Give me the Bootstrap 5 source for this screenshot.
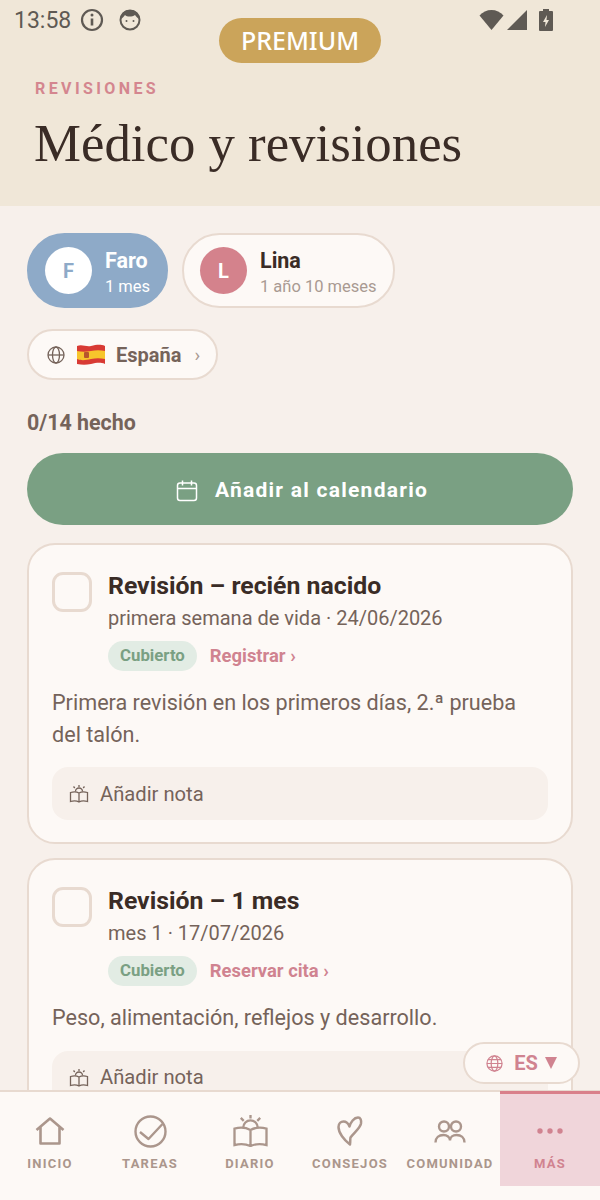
<!DOCTYPE html>
<html lang="es">
<head>
  <meta charset="UTF-8" />
  <meta name="viewport" content="width=device-width, initial-scale=1.0" />
  <title>Médico y revisiones</title>
  <link rel="stylesheet" href="https://cdn.jsdelivr.net/npm/bootstrap@5.3.3/dist/css/bootstrap.min.css" />
  <style>
    html, body { height: 100%; }
    body { background-color: #f7f0eb; font-family: Roboto, "Liberation Sans", sans-serif; color: #3a2c26; overflow: hidden; }
    #app { width: 600px; height: 1200px; overflow: hidden; position: relative; }

    .top-head { background-color: #f0e7d8; height: 206px; }
    .status-row { height: 40px; padding: 0 0 0 14px; color: #5f5a54; font-size: 23px; line-height: 40px; }
    .status-time { padding-top: 2px; }
    .status-right { margin-right: 47px; }
    .premium-pill { position: absolute; top: 18px; left: 219px; width: 162px; height: 45px; border-radius: 23px; background-color: #cba45a; color: #fff; font-family: "Noto Sans", sans-serif; font-size: 25px; font-weight: 500; }
    .head-kicker { margin: 39px 0 0 35px; font-size: 16px; font-weight: 700; letter-spacing: 3.4px; color: #d4868f; line-height: 19px; }
    .head-title { margin: 15px 0 0 34px; font-family: "Liberation Serif", serif; font-size: 52.800px; font-weight: 400; line-height: 60px; color: #3a2c26; }

    .page-body { padding: 27px 27px 0; height: 884px; overflow: hidden; }
    .kid-row { gap: 14px; }
    .kid-pill { height: 75px; border-radius: 38px; padding-left: 16px; border: 2px solid #e8dad0; background-color: #fdf9f6; }
    .kid-pill.is-on { background-color: #8eaac8; border-color: #8eaac8; color: #fff; }
    .kid-avatar { width: 47px; height: 47px; border-radius: 50%; font-size: 20px; font-weight: 700; }
    .kid-info { margin-left: 13px; padding-top: 5px; }
    .kid-name { font-size: 21.500px; font-weight: 700; line-height: 26px; }
    .kid-age { font-size: 16.500px; line-height: 24px; color: #a99a92; margin-top: 1px; }
    .is-on .kid-age { color: #fff; }

    .country-pill { width: 191px; height: 51px; margin-top: 21px; border: 2px solid #e8dad0; border-radius: 26px; background-color: #fdf9f6; padding: 1px 0 0 18px; font-size: 20px; font-weight: 700; color: #75635a; }
    .country-pill .chev { font-weight: 400; color: #a99a92; margin-left: 13px; font-size: 19px; }
    .flag-icon { margin: 0 11px 0 12px; }
    .done-line { margin-top: 30px; font-size: 21.400px; font-weight: 700; line-height: 26px; color: #75635a; }

    .cal-btn { width: 546px; height: 72px; margin-top: 17px; border: 0; border-radius: 36px; background-color: #7aa083; color: #fff; font-size: 21px; font-weight: 700; letter-spacing: 1.250px; padding: 3px 0 0 4px; }
    .task-box { border: 2px solid #e8dad0; border-radius: 28px; background-color: #fdf9f6; padding: 26px 23px 22px; margin-top: 18px; }
    .task-box + .task-box { margin-top: 14px; }
    .check-box { width: 40px; height: 40px; flex: none; border: 3px solid #e8dad0; border-radius: 11px; margin-right: 16px; margin-top: 1px; }
    .task-title { font-size: 24.800px; font-weight: 700; line-height: 30px; color: #3a2c26; }
    .task-sub { font-size: 20px; line-height: 28px; color: #75635a; margin-top: 3px; }
    .task-tags { margin-top: 9px; height: 30px; }
    .tag-green { background-color: #e2ece4; color: #7aa083; font-size: 16.800px; font-weight: 700; border-radius: 15px; height: 30px; padding: 0 12px; }
    .tag-link { color: #d08390; font-size: 18.400px; font-weight: 700; margin-left: 13px; text-decoration: none; }
    .task-text { font-size: 21.600px; line-height: 31.500px; color: #75635a; margin-top: 16px; }
    .note-row { height: 53px; background-color: #f7f0eb; border-radius: 16px; margin-top: 17px; padding: 1px 0 0 17px; font-size: 20.200px; color: #75635a; }
    .note-row svg { margin-right: 11px; }

    .lang-float { position: absolute; top: 1042px; left: 463px; width: 117px; height: 42px; border: 2px solid #e8dad0; border-radius: 21px; background-color: #fdf9f6; color: #d08390; font-size: 20px; font-weight: 700; }
    .lang-float svg.globe { margin-right: 11px; }
    .lang-float svg.arrow { margin-left: 7px; }

    .bottom-nav { position: absolute; left: 0; right: 0; top: 1090px; height: 110px; background-color: #fdf9f6; border-top: 2px solid #e8dad0; }
    .nav-cell { width: 100px; height: 94px; color: #ab968c; font-size: 13px; font-weight: 700; letter-spacing: 1.250px; }
    .nav-icon { height: 38px; margin-top: 20px; }
    .nav-cell span { display: block; margin-top: 6px; line-height: 16px; white-space: nowrap; }
    .nav-cell.is-on { background-color: #f0d5da; border-top: 3px solid #d9808a; margin-top: -1px; height: 95px; color: #d08390; }
    .nav-cell.is-on .nav-icon { margin-top: 18px; }
  </style>
</head>
<body>
  <div id="app">
    <div class="top-head">
      <div class="status-row d-flex align-items-center">
        <span class="status-time">13:58</span>
        <svg style="margin-left:9px" width="24" height="24" viewBox="0 0 24 24" fill="none" stroke="#5f5a54"><circle cx="12" cy="12" r="10" stroke-width="2.200"/><path d="M12 10.500v7" stroke-width="2.600"/><circle cx="12" cy="7" r="1.500" fill="#5f5a54" stroke="none"/></svg>
        <svg style="margin-left:14px" width="24" height="24" viewBox="0 0 24 24"><circle cx="12" cy="12" r="9.500" fill="#f0e7d8" stroke="#5f5a54" stroke-width="2"/><path d="M3 11c0-6 4-9 9-9s9 3 9 9c-2-1-3-3-4-4-3 2-8 2-10 0-1 1-2 3-4 4z" fill="#5f5a54"/><circle cx="8.500" cy="13" r="1" fill="#5f5a54"/><circle cx="15.500" cy="13" r="1" fill="#5f5a54"/></svg>
        <div class="status-right ms-auto d-flex align-items-center">
          <svg width="25" height="22" viewBox="0 0 24 22"><path d="M0 6.500C3 3 7.500 1 12 1s9 2 12 5.500L12 21z" fill="#5f5a54"/></svg>
          <svg style="margin-left:3px" width="20" height="22" viewBox="0 0 20 22"><path d="M20 1v20H0z" fill="#5f5a54"/></svg>
          <svg style="margin-left:12px" width="14" height="22" viewBox="0 0 14 22"><path d="M4 0h6v2h3a1 1 0 0 1 1 1v18a1 1 0 0 1-1 1H1a1 1 0 0 1-1-1V3a1 1 0 0 1 1-1h3z" fill="#5f5a54"/><path d="M8 6 4 13h2.500L6 18l4-7H7.500z" fill="#f0e7d8"/></svg>
        </div>
      </div>
      <div class="premium-pill d-flex align-items-center justify-content-center">PREMIUM</div>
      <div class="head-kicker">REVISIONES</div>
      <h1 class="head-title">Médico y revisiones</h1>
    </div>

    <div class="page-body">
      <div class="kid-row d-flex">
        <div class="kid-pill is-on d-flex align-items-center" style="width:141px">
          <div class="kid-avatar d-flex align-items-center justify-content-center bg-white" style="color:#8eaac8">F</div>
          <div class="kid-info"><div class="kid-name">Faro</div><div class="kid-age">1 mes</div></div>
        </div>
        <div class="kid-pill d-flex align-items-center" style="width:213px">
          <div class="kid-avatar d-flex align-items-center justify-content-center text-white" style="background-color:#d4828c">L</div>
          <div class="kid-info"><div class="kid-name">Lina</div><div class="kid-age">1 año 10 meses</div></div>
        </div>
      </div>

      <div class="country-pill d-flex align-items-center">
        <svg width="18" height="18" viewBox="0 0 18 18" fill="none" stroke="#75635a" stroke-width="1.300"><circle cx="9" cy="9" r="8"/><ellipse cx="9" cy="9" rx="3.500" ry="8"/><path d="M1 9h16"/></svg>
        <svg class="flag-icon" width="28" height="22" viewBox="0 0 28 22"><path d="M0 2c5-2 9 1 14 0s9-2 14 0v18c-5-2-9-1-14 0s-9 1-14 0z" fill="#d83a34"/><path d="M0 7c5 1 9 1 14 0s9-1 14 0v8c-5-1-9-1-14 0s-9 2-14 0z" fill="#f7c52c"/><rect x="7" y="8" width="5" height="6" rx="1" fill="#b8562c"/></svg>
        España<span class="chev">›</span>
      </div>

      <div class="done-line">0/14 hecho</div>

      <button class="cal-btn d-flex align-items-center justify-content-center" type="button">
        <svg style="margin-right:17px" width="22" height="22" viewBox="0 0 22 22" fill="none" stroke="#fff" stroke-width="1.500"><rect x="1.500" y="3" width="19" height="17.500" rx="2.500"/><path d="M1.500 8.500h19M6.500 .5v5M15.500 .5v5"/></svg>
        Añadir al calendario
      </button>

      <div class="task-box">
        <div class="d-flex">
          <div class="check-box"></div>
          <div>
            <div class="task-title">Revisión – recién nacido</div>
            <div class="task-sub">primera semana de vida · 24/06/2026</div>
            <div class="task-tags d-flex align-items-center">
              <span class="tag-green d-flex align-items-center">Cubierto</span>
              <a class="tag-link" href="#">Registrar ›</a>
            </div>
          </div>
        </div>
        <div class="task-text">Primera revisión en los primeros días, 2.ª prueba del talón.</div>
        <div class="note-row d-flex align-items-center">
          <svg width="20" height="20" viewBox="0 0 20 20" fill="none" stroke="#75635a" stroke-width="1.300"><path d="M1.500 8.500c3-1 6-1 8.500 .5 2.500-1.500 5.500-1.500 8.500-.5v9c-3-1-6-1-8.500 .5-2.500-1.500-5.500-1.500-8.500-.5zM10 9v9"/><path d="M6.500 7.500a3.500 3.500 0 0 1 7 0M10 1v2M4.500 2.500l1.300 1.500M15.500 2.500l-1.300 1.500"/></svg>
          Añadir nota
        </div>
      </div>

      <div class="task-box">
        <div class="d-flex">
          <div class="check-box"></div>
          <div>
            <div class="task-title">Revisión – 1 mes</div>
            <div class="task-sub">mes 1 · 17/07/2026</div>
            <div class="task-tags d-flex align-items-center">
              <span class="tag-green d-flex align-items-center">Cubierto</span>
              <a class="tag-link" href="#">Reservar cita ›</a>
            </div>
          </div>
        </div>
        <div class="task-text">Peso, alimentación, reflejos y desarrollo.</div>
        <div class="note-row d-flex align-items-center">
          <svg width="20" height="20" viewBox="0 0 20 20" fill="none" stroke="#75635a" stroke-width="1.300"><path d="M1.500 8.500c3-1 6-1 8.500 .5 2.500-1.500 5.500-1.500 8.500-.5v9c-3-1-6-1-8.500 .5-2.500-1.500-5.500-1.500-8.500-.5zM10 9v9"/><path d="M6.500 7.500a3.500 3.500 0 0 1 7 0M10 1v2M4.500 2.500l1.300 1.500M15.500 2.500l-1.300 1.500"/></svg>
          Añadir nota
        </div>
      </div>
    </div>

    <div class="lang-float d-flex align-items-center justify-content-center">
      <svg class="globe" width="17" height="17" viewBox="0 0 18 18" fill="none" stroke="#d08390" stroke-width="1.300"><circle cx="9" cy="9" r="8"/><ellipse cx="9" cy="9" rx="3.500" ry="8"/><path d="M1 9h16M2 5h14M2 13h14"/></svg>
      ES
      <svg class="arrow" width="12" height="12" viewBox="0 0 12 12"><path d="M0 0h12L6 12z" fill="#d08390"/></svg>
    </div>

    <nav class="bottom-nav d-flex">
      <div class="nav-cell d-flex flex-column align-items-center">
        <div class="nav-icon d-flex align-items-center">
          <svg width="30" height="28" viewBox="0 0 30 28" fill="none" stroke="#ab968c" stroke-width="2.600" stroke-linejoin="round"><path d="M1.500 13 15 1.500 28.500 13M5.500 10v16.500h19V10"/></svg>
        </div>
        <span>INICIO</span>
      </div>
      <div class="nav-cell d-flex flex-column align-items-center">
        <div class="nav-icon d-flex align-items-center">
          <svg width="33" height="33" viewBox="0 0 33 33" fill="none" stroke="#ab968c" stroke-width="2.400"><circle cx="16.500" cy="16.500" r="15"/><path d="M4.500 16 13 23 27 8" stroke-linejoin="round" transform="translate(1.500 1)"/></svg>
        </div>
        <span>TAREAS</span>
      </div>
      <div class="nav-cell d-flex flex-column align-items-center">
        <div class="nav-icon d-flex align-items-center">
          <svg width="35" height="32" viewBox="0 0 36 33" fill="none" stroke="#ab968c" stroke-width="2.400"><path d="M1.500 14c6-1.500 12-1 16.500 1.500C22.500 13 28.500 12.500 34.500 14v17c-6-1.500-12-1-16.500 1-4.500-2-10.500-2.500-16.500-1zM18 15.500V32"/><path d="M10.500 13a7.500 7.500 0 0 1 15 0M18 0v3.500M8 3l3 3M28 3l-3 3"/></svg>
        </div>
        <span>DIARIO</span>
      </div>
      <div class="nav-cell d-flex flex-column align-items-center">
        <div class="nav-icon d-flex align-items-center">
          <svg width="26" height="30" viewBox="0 0 26 30" fill="none" stroke="#ab968c" stroke-width="2.500" stroke-linejoin="round"><path d="M13 28.500C7 24 1.500 17 1.500 11c0-3.500 2.500-5.500 5-5.500 3 0 4.800 2 6 5 1-4 4.500-9 8.500-9 2.500 0 3.500 2.500 3 6-1 5-7 9-10.500 14-.5 2 0 4.500-.5 6.500z"/></svg>
        </div>
        <span>CONSEJOS</span>
      </div>
      <div class="nav-cell d-flex flex-column align-items-center">
        <div class="nav-icon d-flex align-items-center">
          <svg width="32" height="23" viewBox="0 0 32 23" fill="none" stroke="#ab968c" stroke-width="2.400"><circle cx="10" cy="6.500" r="5"/><circle cx="22" cy="6.500" r="5"/><path d="M1.500 22.500c0-5 3.500-7.500 8-7.500 3.500 0 6.500 2 6.500 5.500 0-3.500 3-5.500 6.500-5.500 4.500 0 8 2.500 8 7.500"/></svg>
        </div>
        <span>COMUNIDAD</span>
      </div>
      <div class="nav-cell is-on d-flex flex-column align-items-center">
        <div class="nav-icon d-flex align-items-center">
          <svg width="28" height="6" viewBox="0 0 28 6" fill="#d08390"><circle cx="4" cy="3" r="2.700"/><circle cx="14" cy="3" r="2.700"/><circle cx="24" cy="3" r="2.700"/></svg>
        </div>
        <span>MÁS</span>
      </div>
    </nav>
  </div>
  <script src="https://cdn.jsdelivr.net/npm/bootstrap@5.3.3/dist/js/bootstrap.bundle.min.js"></script>
</body>
</html>
